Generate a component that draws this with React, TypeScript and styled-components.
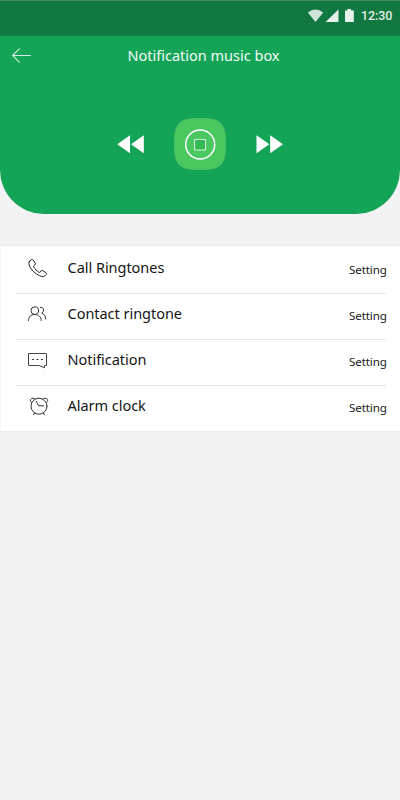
import React from "react";
import styled, { createGlobalStyle } from "styled-components";

const GlobalStyle = createGlobalStyle`
  * { box-sizing: border-box; }
  body {
    margin: 0;
    background: #f3f3f3;
    font-family: "Noto Sans", "Open Sans", sans-serif;
  }
`;

const Screen = styled.div`
  width: 400px;
  height: 800px;
  overflow: hidden;
  background: #f3f3f3;
`;

const StatusBar = styled.div`
  height: 36px;
  padding: 0 7px 4px 0;
  display: flex;
  align-items: center;
  justify-content: flex-end;
  background: #107840;
  border-top: 1px solid #438c63;
  border-bottom: 1px solid #128148;
`;

const Clock = styled.span`
  width: 32px;
  margin-left: 6px;
  font: 500 12.5px/16px Roboto, sans-serif;
  letter-spacing: -0.1px;
  white-space: nowrap;
  color: #e0eee6;
`;

const Player = styled.section`
  height: 178px;
  background: #14a457;
  border-radius: 0 0 44px 44px;
`;

const TitleBar = styled.header`
  height: 40px;
  padding: 0 12px;
  display: grid;
  grid-template-columns: 20px 1fr 20px;
  align-items: center;
`;

const Title = styled.h1`
  margin: -2px -7px 0 0;
  font-size: 14.5px;
  font-weight: 400;
  line-height: 20px;
  letter-spacing: 0;
  text-align: center;
  white-space: nowrap;
  color: #f2fbf5;
`;

const Controls = styled.div`
  display: flex;
  justify-content: center;
  align-items: center;
  gap: 30px;
  padding-top: 42px;
`;

const IconButton = styled.button`
  display: block;
  padding: 0;
  border: 0;
  background: none;
  line-height: 0;
`;

const Icon = styled.svg`
  display: block;
  fill: none;
  stroke-linecap: round;
  stroke-linejoin: round;
`;

const List = styled.ul`
  margin: 31px 0 0;
  padding: 0 14px 0 15px;
  height: 187px;
  list-style: none;
  background: #fff;
  border: solid #ececec;
  border-width: 1px 0;
  box-shadow: inset 1px 0 #f7f7f7;
`;

const Row = styled.li`
  height: 46px;
  display: grid;
  grid-template-columns: 52.5px 1fr 38px;
  align-items: start;
  border-bottom: 1px solid #e7e7e7;

  &:first-child { height: 48px; padding-top: 2px; }
  &:last-child { border-bottom: 0; }
`;

const RowIcon = styled.span`
  padding: 9px 0 0 11px;
`;

const Label = styled.span`
  padding-top: 8px;
  font-size: 14.5px;
  line-height: 22px;
  letter-spacing: -0.03px;
  color: #151515;
  white-space: nowrap;
`;

const Setting = styled.span`
  margin: 13px -2px 0 1px;
  font-size: 11.6px;
  line-height: 18px;
  letter-spacing: -0.12px;
  color: #202020;
  white-space: nowrap;
`;

const Phone = () => (
  <Icon width="24" height="24" stroke="#222" strokeWidth="1">
    <path d="M3.5 4.2 5.4 2.7Q6.4 2.1 7.2 3.1L9.2 6Q9.8 7 8.9 7.8L7.8 8.7Q7.3 9.3 7.8 10.1C9.1 12.2 10.8 14 12.8 15.2Q13.7 15.7 14.2 15.1L15 13.9Q15.7 13 16.7 13.6L19.9 15.7Q21 16.4 20.3 17.4C18.7 19.6 16.5 20.1 13.7 18.8C9 16.7 5.4 13 3.5 9.1Q2.1 6.1 3.5 4.2Z" />
  </Icon>
);

const Contacts = () => (
  <Icon width="24" height="24" stroke="#333" strokeWidth="1">
    <circle cx="8.8" cy="7.6" r="3.8" />
    <path d="M2.5 17.5C2.5 13.7 5 11.5 8.8 11.5S15.2 13.7 15.2 17.5M14.3 4.4C16.3 4 17.5 5.3 17.5 7.1C17.5 8.5 16.9 9.5 15.7 10.2C18.3 11 19.5 13.1 19.7 16" />
  </Icon>
);

const Message = () => (
  <Icon width="24" height="24" stroke="#444" strokeWidth="1">
    <path d="M3 4.5H20Q20.5 4.5 20.5 5V16.5H18.5V18.8L13.2 16.5H3Q2.5 16.5 2.5 16V5Q2.5 4.5 3 4.5Z" />
    <path d="M6.5 10.5h1M11 10.5h1M15.5 10.5h1" stroke="#222" />
  </Icon>
);

const Alarm = () => (
  <Icon width="24" height="24" stroke="#333" strokeWidth="1">
    <circle cx="13" cy="11.2" r="8" />
    <path d="M10.2 6.3 12.7 10.8H17.7M8.6 17.9 7.5 19.8M17.4 17.9 18.5 19.8" />
    <path d="M5.5 7.6C3.2 6 4.3 3.2 7 3.2Q8.6 3.2 9.2 4.1M20.5 7.6C22.8 6 21.7 3.2 19 3.2Q17.4 3.2 16.8 4.1" />
  </Icon>
);

const rows = [
  { label: "Call Ringtones", icon: Phone },
  { label: "Contact ringtone", icon: Contacts },
  { label: "Notification", icon: Message },
  { label: "Alarm clock", icon: Alarm },
];

export default function App() {
  return (
    <Screen>
      <GlobalStyle />
      <StatusBar>
        <Icon width="48" height="16">
          <path d="M0.8 4.6Q8.5-1.7 16.2 4.6L8.5 14Z" fill="#cfe4d8" />
          <path d="M31.5 1.5V14H18.5Z" fill="#e7f2eb" />
          <path d="M38 2.5H40.4V1H44V2.5H46.8V14H38Z" fill="#e7f2eb" />
        </Icon>
        <Clock>12:30</Clock>
      </StatusBar>
      <Player>
        <TitleBar>
          <IconButton aria-label="Back">
            <Icon width="20" height="18" stroke="#d5eddf" strokeWidth="1.1">
              <path d="M18.5 8.5H0.8M7.3 1.8 0.6 8.5 7.3 15.2" />
            </Icon>
          </IconButton>
          <Title>Notification music box</Title>
        </TitleBar>
        <Controls>
          <IconButton aria-label="Previous">
            <Icon width="27" height="20">
              <path d="M0.3 10.3 13 1.3V19.3ZM14 10.3 26.8 1.3V19.3Z" fill="#fff" />
            </Icon>
          </IconButton>
          <IconButton aria-label="Stop">
            <Icon width="52" height="52">
              <path d="M0 26C0 5 5 0 26 0S52 5 52 26S47 52 26 52S0 47 0 26Z" fill="#4bc760" />
              <circle cx="26.2" cy="26.5" r="14.5" stroke="#fff" strokeWidth="1.5" />
              <path d="M21 21.5H31.5V32H21Z" stroke="#d8f5de" strokeWidth="1" fill="#32b954" />
            </Icon>
          </IconButton>
          <IconButton aria-label="Next">
            <Icon width="27" height="20">
              <path d="M0.5 1.3 13.3 10.3 0.5 19.3ZM14.2 1.3 27 10.3 14.2 19.3Z" fill="#fff" />
            </Icon>
          </IconButton>
        </Controls>
      </Player>
      <List>
        {rows.map(({ label, icon: Glyph }) => (
          <Row key={label}>
            <RowIcon><Glyph /></RowIcon>
            <Label>{label}</Label>
            <Setting>Setting</Setting>
          </Row>
        ))}
      </List>
    </Screen>
  );
}
